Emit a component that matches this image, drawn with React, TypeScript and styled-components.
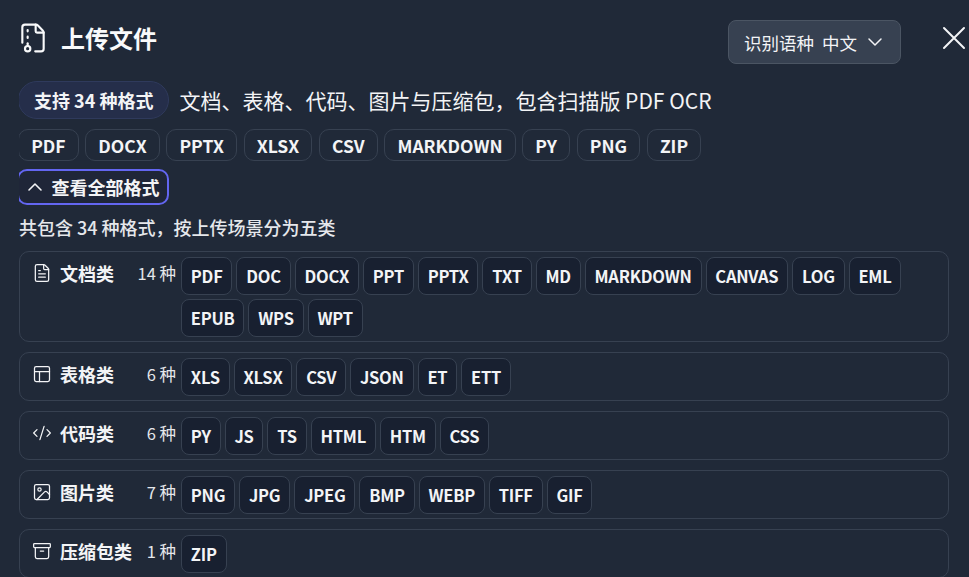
import React from 'react';
import styled, { createGlobalStyle } from 'styled-components';
import { ChevronDown, ChevronUp, CodeXml, FileArchive, FileText, Image, Archive, PanelsTopLeft } from 'lucide-react';

const GlobalStyle = createGlobalStyle`
  html, body {
    margin: 0;
    height: 100%;
    background: #202938;
    overflow: hidden;
  }
  * { box-sizing: border-box; }
`;

const groups = [
  { name: '文档类', count: '14 种', Icon: FileText, items: ['PDF', 'DOC', 'DOCX', 'PPT', 'PPTX', 'TXT', 'MD', 'MARKDOWN', 'CANVAS', 'LOG', 'EML', 'EPUB', 'WPS', 'WPT'] },
  { name: '表格类', count: '6 种', Icon: PanelsTopLeft, items: ['XLS', 'XLSX', 'CSV', 'JSON', 'ET', 'ETT'] },
  { name: '代码类', count: '6 种', Icon: CodeXml, items: ['PY', 'JS', 'TS', 'HTML', 'HTM', 'CSS'] },
  { name: '图片类', count: '7 种', Icon: Image, items: ['PNG', 'JPG', 'JPEG', 'BMP', 'WEBP', 'TIFF', 'GIF'] },
  { name: '压缩包类', count: '1 种', Icon: Archive, items: ['ZIP'] },
];

const popular = ['PDF', 'DOCX', 'PPTX', 'XLSX', 'CSV', 'MARKDOWN', 'PY', 'PNG', 'ZIP'];

const Page = styled.div`
  width: 969px;
  height: 577px;
  overflow: hidden;
  padding-top: 20px;
  background: #202938;
  color: #f3f4f6;
  font-family: 'Noto Sans CJK SC', 'Noto Sans', sans-serif;
`;

const Header = styled.div`
  display: flex;
  align-items: flex-start;
  height: 44px;
  padding-left: 17px;
  padding-right: 3px;
`;

const Title = styled.div`
  flex: 1;
  display: flex;
  align-items: center;
  gap: 12px;
  height: 36px;
  font-size: 24px;
  font-weight: 700;
  line-height: 36px;
  color: #f9fafb;
`;

const LangSelect = styled.div`
  display: flex;
  align-items: center;
  gap: 8px;
  width: 173px;
  height: 44px;
  padding-left: 15px;
  margin-right: 41px;
  border: 1px solid #4b5563;
  border-radius: 8px;
  background: #374151;
  font-size: 17.5px;
  color: #f3f4f6;
`;

const LangChevron = styled(ChevronDown)`
  margin-left: -2px;
`;

const CloseIcon = styled.svg`
  flex: none;
  margin-top: 6px;
`;

const Body = styled.div`
  margin: 17px 20px 0 19px;
  overflow: hidden;
`;

const Summary = styled.div`
  display: flex;
  align-items: center;
  gap: 10px;
  height: 38px;
  margin-left: -1px;
`;

const Badge = styled.span`
  display: flex;
  align-items: center;
  height: 38px;
  padding: 0 15px;
  border: 1px solid #2f3a5c;
  border-radius: 19px;
  background: #252e4a;
  font-size: 18px;
  font-weight: 700;
  white-space: nowrap;
  color: #f3f4f6;
`;

const SummaryText = styled.span`
  font-size: 21px;
  white-space: nowrap;
  color: #f3f4f6;
`;

const PopularRow = styled.div`
  display: flex;
  gap: 6.5px;
  margin: 10px 0 0 -1px;
`;

const PopularChip = styled.span`
  display: flex;
  align-items: center;
  height: 32px;
  padding: 0 12.15px;
  border: 1px solid #374151;
  border-radius: 10px;
  font-size: 17.5px;
  font-weight: 700;
  color: #f3f4f6;
`;

const ToggleButton = styled.div`
  display: flex;
  align-items: center;
  gap: 5px;
  width: 152px;
  height: 36px;
  margin: 8px 0 0 -2px;
  padding-left: 3.5px;
  border: 2.5px solid #6366f1;
  border-radius: 10px;
  background: #1f2638;
  font-size: 18px;
  font-weight: 700;
  white-space: nowrap;
  color: #f3f4f6;
`;

const Hint = styled.div`
  margin-top: 10px;
  height: 24px;
  font-size: 18px;
  font-weight: 500;
  line-height: 24px;
  white-space: nowrap;
  color: #e5e7eb;
`;

const Groups = styled.div`
  display: flex;
  flex-direction: column;
  gap: 10px;
  margin-top: 12px;
`;

const Group = styled.div`
  display: flex;
  padding: 5px 9px 4px 0;
  border: 1px solid #374151;
  border-radius: 10px;
`;

const GroupLabel = styled.div`
  flex: none;
  display: flex;
  align-items: flex-start;
  width: 161px;
  padding: 4px 5px 0 12px;
  line-height: 24px;
`;

const GroupIcon = styled.span`
  flex: none;
  display: flex;
  width: 20px;
  height: 24px;
  align-items: center;
  justify-content: center;
  margin-right: 8px;
`;

const GroupName = styled.span`
  flex: 1;
  font-size: 18px;
  font-weight: 700;
  white-space: nowrap;
  color: #f3f4f6;
`;

const GroupCount = styled.span`
  font-size: 16.5px;
  white-space: nowrap;
  color: #e5e7eb;
`;

const Chips = styled.div`
  flex: 1;
  display: flex;
  flex-wrap: wrap;
  gap: 4px;
`;

const Chip = styled.span`
  display: flex;
  align-items: center;
  height: 38px;
  padding: 0 8.85px;
  border: 1px solid #374151;
  border-radius: 8px;
  background: #182030;
  font-size: 16.5px;
  font-weight: 700;
  letter-spacing: -0.25px;
  color: #f3f4f6;
`;

export default function App() {
  return (
    <Page>
      <GlobalStyle />
      <Header>
        <Title>
          <FileArchive size={32} strokeWidth={1.6} />
          上传文件
        </Title>
        <LangSelect>
          <span>识别语种</span>
          <span>中文</span>
          <LangChevron size={24} strokeWidth={1.5} />
        </LangSelect>
        <CloseIcon width="24" height="24" viewBox="0 0 24 24" fill="none" stroke="#f3f4f6" strokeWidth="2" strokeLinecap="round">
          <path d="M2 2L22 22M22 2L2 22" />
        </CloseIcon>
      </Header>
      <Body>
        <Summary>
          <Badge>支持 34 种格式</Badge>
          <SummaryText>文档、表格、代码、图片与压缩包，包含扫描版 PDF OCR</SummaryText>
        </Summary>
        <PopularRow>
          {popular.map((item) => (
            <PopularChip key={item}>{item}</PopularChip>
          ))}
        </PopularRow>
        <ToggleButton>
          <ChevronUp size={24} strokeWidth={1.6} />
          查看全部格式
        </ToggleButton>
        <Hint>共包含 34 种格式，按上传场景分为五类</Hint>
        <Groups>
          {groups.map(({ name, count, Icon, items }) => (
            <Group key={name}>
              <GroupLabel>
                <GroupIcon>
                  <Icon size={20} strokeWidth={1.5} />
                </GroupIcon>
                <GroupName>{name}</GroupName>
                <GroupCount>{count}</GroupCount>
              </GroupLabel>
              <Chips>
                {items.map((item) => (
                  <Chip key={item}>{item}</Chip>
                ))}
              </Chips>
            </Group>
          ))}
        </Groups>
      </Body>
    </Page>
  );
}
